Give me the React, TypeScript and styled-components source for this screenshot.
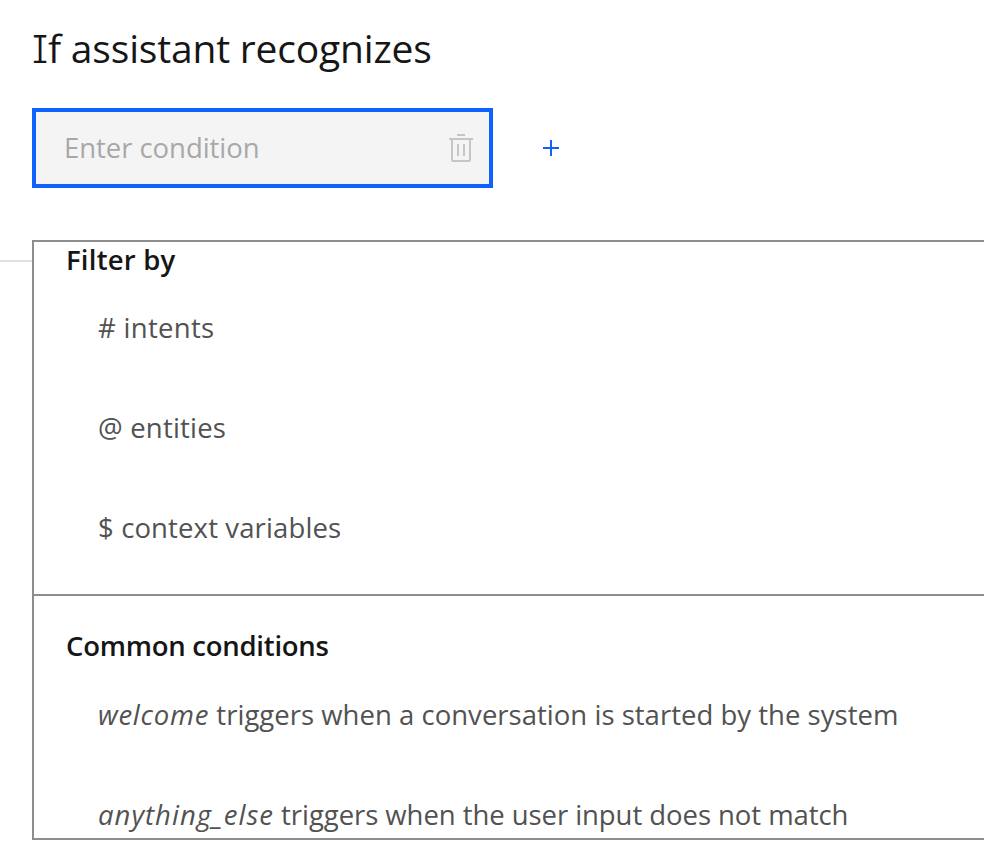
import React from "react";
import styled, { createGlobalStyle } from "styled-components";

const GlobalStyle = createGlobalStyle`
  *, *::before, *::after { box-sizing: border-box; }
  body {
    margin: 0;
    background: #fff;
    color: #161616;
    font-family: "Open Sans", "Noto Sans", sans-serif;
    overflow: hidden;
  }
`;

const Page = styled.main`
  width: 984px;
  height: 866px;
  overflow: hidden;
  padding-top: 22px;
`;

const Title = styled.h1`
  margin: 0 0 34px 32px;
  font-size: 39px;
  font-weight: 400;
  line-height: 52px;
  letter-spacing: -0.18px;
  white-space: nowrap;
`;

/* Capital I drawn with slab serifs */
const SerifedCapital = styled.span`
  font-family: "Inter", sans-serif;
  font-size: 38.5px;
  font-weight: 300;
  font-feature-settings: "cv08" 1;
  line-height: 1;
`;

const ConditionRow = styled.div`
  display: flex;
  align-items: center;
  gap: 50px;
  margin-left: 32px;
`;

const ConditionField = styled.div`
  display: flex;
  align-items: center;
  justify-content: space-between;
  width: 461px;
  height: 80px;
  padding: 0 16px 0 28px;
  border: 4px solid #0f62fe;
  background: #f4f4f4;
`;

const Tracked = styled.span<{ $track: number }>`
  letter-spacing: ${({ $track }) => $track}px;
`;

const Placeholder = styled.span`
  font-size: 27.5px;
  line-height: 36px;
  color: #a8a8a8;
  white-space: nowrap;
`;

const IconButton = styled.button`
  display: flex;
  padding: 0;
  border: 0;
  background: none;
`;

const Results = styled.div`
  display: flex;
  align-items: flex-start;
  margin-top: 52px;
`;

const Rule = styled.div`
  flex: 0 0 32px;
  height: 2px;
  margin-top: 20px;
  background: #e0e0e0;
`;

const Panel = styled.div`
  flex: 1;
  height: 600px;
  overflow: hidden;
  border: 2px solid #8d8d8d;
  border-right: 0;
`;

const Section = styled.section<{ $top: number; $height?: number; $divided?: boolean }>`
  height: ${({ $height }) => ($height ? `${$height}px` : "auto")};
  padding-top: ${({ $top }) => $top}px;
  padding-left: 32px;
  border-bottom: ${({ $divided }) => ($divided ? "2px solid #8d8d8d" : "0")};
`;

const SectionTitle = styled.h2`
  margin: 0;
  font-size: 27.5px;
  font-weight: 600;
  line-height: 36px;
  white-space: nowrap;
`;

const OptionList = styled.ul<{ $offset: number }>`
  display: flex;
  flex-direction: column;
  gap: 64px;
  margin: ${({ $offset }) => $offset}px 0 0;
  padding: 0 0 0 32px;
  list-style: none;
`;

const Option = styled.li`
  font-size: 27.5px;
  line-height: 36px;
  color: #525252;
  white-space: nowrap;
`;

const TrashIcon = () => (
  <svg width="24" height="28" viewBox="0 0 24 28" fill="none" stroke="#c6c6c6" strokeWidth="2">
    <path d="M8 1h8M0 5h24M3 5v21a1 1 0 0 0 1 1h16a1 1 0 0 0 1-1V5M9 10v12M15 10v12" />
  </svg>
);

const PlusIcon = () => (
  <svg width="16" height="16" viewBox="0 0 16 16" fill="none" stroke="#0f62fe" strokeWidth="2">
    <path d="M8 0v16M0 8h16" />
  </svg>
);

const filters = [
  { text: "# intents", track: 0.3 },
  { text: "@ entities", track: 0.2 },
  { text: "$ context variables", track: 0.13 },
];

const conditions = [
  { name: "welcome", nameTrack: 0.75, text: " triggers when a conversation is started by the system", track: 0.02 },
  { name: "anything_else", nameTrack: 1, text: " triggers when the user input does not match", track: -0.06 },
];

export default function App() {
  return (
    <>
      <GlobalStyle />
      <Page>
        <Title>
          <SerifedCapital>I</SerifedCapital>f assistant recognizes
        </Title>
        <ConditionRow>
          <ConditionField>
            <Placeholder>
              <Tracked $track={-0.05}>Enter condition</Tracked>
            </Placeholder>
            <IconButton aria-label="Delete condition">
              <TrashIcon />
            </IconButton>
          </ConditionField>
          <IconButton aria-label="Add condition">
            <PlusIcon />
          </IconButton>
        </ConditionRow>
        <Results>
          <Rule />
          <Panel>
            <Section $top={0} $height={354} $divided>
              <SectionTitle>
                <Tracked $track={0.22}>Filter by</Tracked>
              </SectionTitle>
              <OptionList $offset={32}>
                {filters.map(({ text, track }) => (
                  <Option key={text}>
                    <Tracked $track={track}>{text}</Tracked>
                  </Option>
                ))}
              </OptionList>
            </Section>
            <Section $top={32}>
              <SectionTitle>
                <Tracked $track={-0.25}>Common conditions</Tracked>
              </SectionTitle>
              <OptionList $offset={33}>
                {conditions.map(({ name, nameTrack, text, track }) => (
                  <Option key={name}>
                    <Tracked as="em" $track={nameTrack}>{name}</Tracked>
                    <Tracked $track={track}>{text}</Tracked>
                  </Option>
                ))}
              </OptionList>
            </Section>
          </Panel>
        </Results>
      </Page>
    </>
  );
}
